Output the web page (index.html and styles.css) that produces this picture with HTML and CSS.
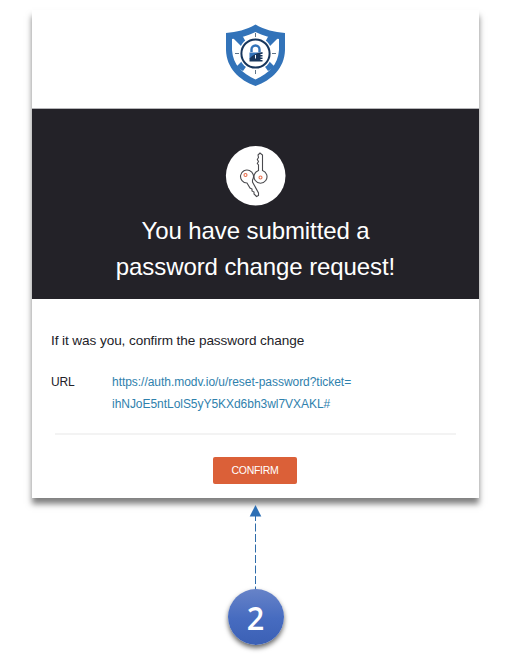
FILE: index.html
```html
<!DOCTYPE html>
<html lang="en">
<head>
<meta charset="utf-8">
<title>Password change request</title>
<link rel="stylesheet" href="styles.css">
</head>
<body>
<main class="card">
  <header class="brand">
    <svg class="shield" width="61" height="64" viewBox="0 0 61 64" aria-hidden="true">
      <path d="M30.500 1.500C40 7 49 9 60 10V27C59.500 45 47 57 30.500 63C14 57 1.500 45 1 27V10C12 9 21 7 30.500 1.500Z" fill="#3273b9"/>
      <path d="M30.500 9C38 13 46 14.500 54 16V27C53 42 44 50 30.500 56.500C17 50 8 42 7 27V16C15 14.500 23 13 30.500 9Z" fill="#fff"/>
      <path d="M7 14L17 12L22 21L18 25ZM54 14L44 12L39 21L43 25ZM18 37L23 41L18 48L11 44ZM43 37L38 41L43 48L50 44Z" fill="#3273b9"/>
      <circle cx="30.500" cy="30.500" r="16.500" fill="#fff"/>
      <circle cx="30.500" cy="30.500" r="14.100" fill="#fff" stroke="#17365c" stroke-width="2"/>
      <path d="M30.500 10V14M30.500 47V51M10 30.500H14M47 30.500H51" stroke="#5f7488" stroke-width="1"/>
      <path d="M26.500 29V26.500A4 4 0 0 1 34.500 26.500V29" fill="none" stroke="#3273b9" stroke-width="2.400"/>
      <path d="M24.500 29.500H36L24.500 36Z" fill="#3273b9"/>
      <path d="M24.500 35.500Q29 30 37.500 29V38.500H24.500Z" fill="#17365c"/>
      <path d="M30.500 32V35.500M35.500 31.500H38M35.500 34H38M35.500 36.500H38" stroke="#fff" stroke-width="1"/>
    </svg>
  </header>
  <section class="hero">
    <svg class="keys" width="61" height="60" viewBox="0 0 61 60" aria-hidden="true">
      <circle cx="30.700" cy="29.800" r="29.800" fill="#fff"/>
      <g fill="none" stroke="#4a4a4e" stroke-width="1.100">
        <path d="M33.500 24.500V19L32.300 17.500L33.500 15.500L32.300 13.500L33.500 11.500L33 9L35 7L37.500 9V24.500A6.500 6.500 0 1 1 33.500 24.500Z"/>
        <path d="M27.500 34A6.500 6.500 0 1 0 22 37L25 42L27 43L27 45L29 46L29 48L31.500 50.500L33.500 49.500V47L27.500 36Z"/>
      </g>
      <g fill="none" stroke="#e8704f" stroke-width="1.100"><circle cx="20.500" cy="29" r="1.500"/><circle cx="35.500" cy="31.500" r="1.500"/></g>
    </svg>
    <h1>You have submitted a<br>password change request!</h1>
  </section>
  <section class="details">
    <p class="lead">If it was you, confirm the password change</p>
    <div class="row">
      <span class="label">URL</span>
      <a class="link">https://auth.modv.io/u/reset-password?ticket=<br>ihNJoE5ntLolS5yY5KXd6bh3wl7VXAKL#</a>
    </div>
    <hr>
    <button class="confirm" type="button">CONFIRM</button>
  </section>
</main>
<div class="step">
  <svg class="arrow" width="14" height="84" viewBox="0 0 14 84" aria-hidden="true">
    <path d="M6.500 11V84" stroke="#2e6caa" stroke-width="1" stroke-dasharray="8 2.500" stroke-dashoffset="3"/>
    <path d="M6.500 0L12.300 11.500H.7Z" fill="#2e70b5"/>
  </svg>
  <div class="number"><span class="digit">2</span></div>
</div>
</body>
</html>
```
FILE: styles.css
```css
* {
  box-sizing: border-box;
}

body {
  margin: 0;
  padding-top: 10px;
  height: 660px;
  overflow: hidden;
  background: #fff;
  color: #222228;
  font-family: "Liberation Sans", Arial, sans-serif;
}

.card {
  width: 447px;
  height: 488px;
  margin-left: 32px;
  background: #fff;
  box-shadow: 0 6px 6px rgba(0, 0, 0, 0.5);
}

.brand {
  height: 99px;
  padding-top: 13px;
  border-bottom: 1px solid #b5b5b8;
}

.shield,
.keys {
  display: block;
  margin: 0 auto;
}

.hero {
  height: 190px;
  padding-top: 37px;
  background: #232228;
  color: #fff;
  text-align: center;
}

h1 {
  margin: 7px 0 0;
  font-size: 24px;
  font-weight: 400;
  line-height: 36px;
  letter-spacing: -0.09px;
}

.details {
  display: flex;
  flex-direction: column;
  padding: 31px 19px 0;
}

.lead {
  margin: 0;
  font-size: 13.600px;
  line-height: 22px;
  letter-spacing: -0.09px;
}

.row {
  display: grid;
  grid-template-columns: 61px 1fr;
  margin-top: 19px;
  font-size: 12px;
  line-height: 22px;
  letter-spacing: -0.04px;
}

.label {
  letter-spacing: -0.2px;
}

.link {
  color: #2f81ad;
}

hr {
  width: 401px;
  height: 2px;
  margin: 18px 0 0 4px;
  border: 0;
  background: #f3f3f3;
}

.confirm {
  width: 84px;
  height: 27px;
  margin: 22px 0 0 162px;
  padding: 0;
  border: 0;
  border-radius: 2px;
  background: #db6038;
  color: #fff;
  font: 10.500px/27px "Liberation Sans", Arial, sans-serif;
  letter-spacing: -0.25px;
}

.step {
  display: flex;
  flex-direction: column;
  align-items: center;
  width: 56px;
  margin: 7px 0 0 228px;
}

.number {
  width: 56px;
  height: 56px;
  border-radius: 50%;
  background: linear-gradient(#6783c8, #476cc0 52%, #3b60b5);
  box-shadow: 0 3px 5px rgba(0, 0, 0, 0.6);
  color: #fff;
  font: 600 33px/58px "Open Sans", sans-serif;
  text-align: center;
}

.digit {
  display: inline-block;
  transform: translateX(-1px) scaleX(0.93);
}
```
